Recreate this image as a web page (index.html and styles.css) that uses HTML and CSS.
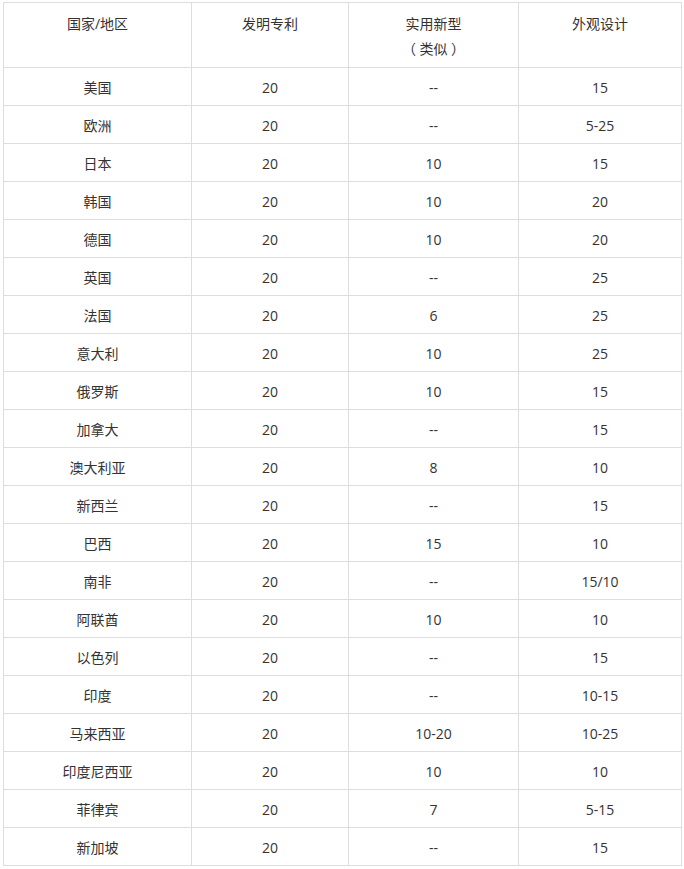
FILE: index.html
```html
<!DOCTYPE html>
<html lang="zh-CN">
<head>
<meta charset="utf-8">
<title>专利保护期限</title>
<link rel="stylesheet" href="styles.css">
</head>
<body>
<table class="terms">
  <colgroup>
    <col class="c1"><col class="c2"><col class="c3"><col class="c4">
  </colgroup>
  <thead>
    <tr><th>国家/地区</th><th>发明专利</th><th>实用新型<br><span class="note"><span class="paren">（</span>类似<span class="paren">）</span></span></th><th>外观设计</th></tr>
  </thead>
  <tbody>
    <tr><td>美国</td><td>20</td><td>--</td><td>15</td></tr>
    <tr><td>欧洲</td><td>20</td><td>--</td><td>5-25</td></tr>
    <tr><td>日本</td><td>20</td><td>10</td><td>15</td></tr>
    <tr><td>韩国</td><td>20</td><td>10</td><td>20</td></tr>
    <tr><td>德国</td><td>20</td><td>10</td><td>20</td></tr>
    <tr><td>英国</td><td>20</td><td>--</td><td>25</td></tr>
    <tr><td>法国</td><td>20</td><td>6</td><td>25</td></tr>
    <tr><td>意大利</td><td>20</td><td>10</td><td>25</td></tr>
    <tr><td>俄罗斯</td><td>20</td><td>10</td><td>15</td></tr>
    <tr><td>加拿大</td><td>20</td><td>--</td><td>15</td></tr>
    <tr><td>澳大利亚</td><td>20</td><td>8</td><td>10</td></tr>
    <tr><td>新西兰</td><td>20</td><td>--</td><td>15</td></tr>
    <tr><td>巴西</td><td>20</td><td>15</td><td>10</td></tr>
    <tr><td>南非</td><td>20</td><td>--</td><td>15/10</td></tr>
    <tr><td>阿联酋</td><td>20</td><td>10</td><td>10</td></tr>
    <tr><td>以色列</td><td>20</td><td>--</td><td>15</td></tr>
    <tr><td>印度</td><td>20</td><td>--</td><td>10-15</td></tr>
    <tr><td>马来西亚</td><td>20</td><td>10-20</td><td>10-25</td></tr>
    <tr><td>印度尼西亚</td><td>20</td><td>10</td><td>10</td></tr>
    <tr><td>菲律宾</td><td>20</td><td>7</td><td>5-15</td></tr>
    <tr><td>新加坡</td><td>20</td><td>--</td><td>15</td></tr>
  </tbody>
</table>
</body>
</html>
```
FILE: styles.css
```css
html, body {
  margin: 0;
  padding: 0;
  background: #ffffff;
}
body {
  padding: 2px 0 0 3px;
  font-family: "Open Sans", "Noto Sans CJK SC", sans-serif;
  font-size: 14px;
  color: #333333;
}
.terms {
  border-collapse: collapse;
  table-layout: fixed;
  width: 678px;
}
.c1 { width: 188px; }
.c2 { width: 157px; }
.c3 { width: 170px; }
.c4 { width: 163px; }
.terms th,
.terms td {
  border: 1px solid #dddddd;
  text-align: center;
  line-height: 24px;
  padding: 0 8px;
  font-weight: normal;
}
.terms th {
  vertical-align: top;
  padding-top: 9px;
  padding-bottom: 7px;
}
.terms td {
  height: 37px;
  box-sizing: border-box;
  padding-top: 8px;
  padding-bottom: 5px;
  vertical-align: middle;
}
.note {
  display: inline-block;
  vertical-align: top;
  height: 24px;
  line-height: 24px;
  font-family: "Noto Sans CJK SC", sans-serif;
}
.paren {
  display: inline-block;
  vertical-align: top;
  width: 14px;
  text-align: center;
  font-feature-settings: "halt" 1;
}
```
